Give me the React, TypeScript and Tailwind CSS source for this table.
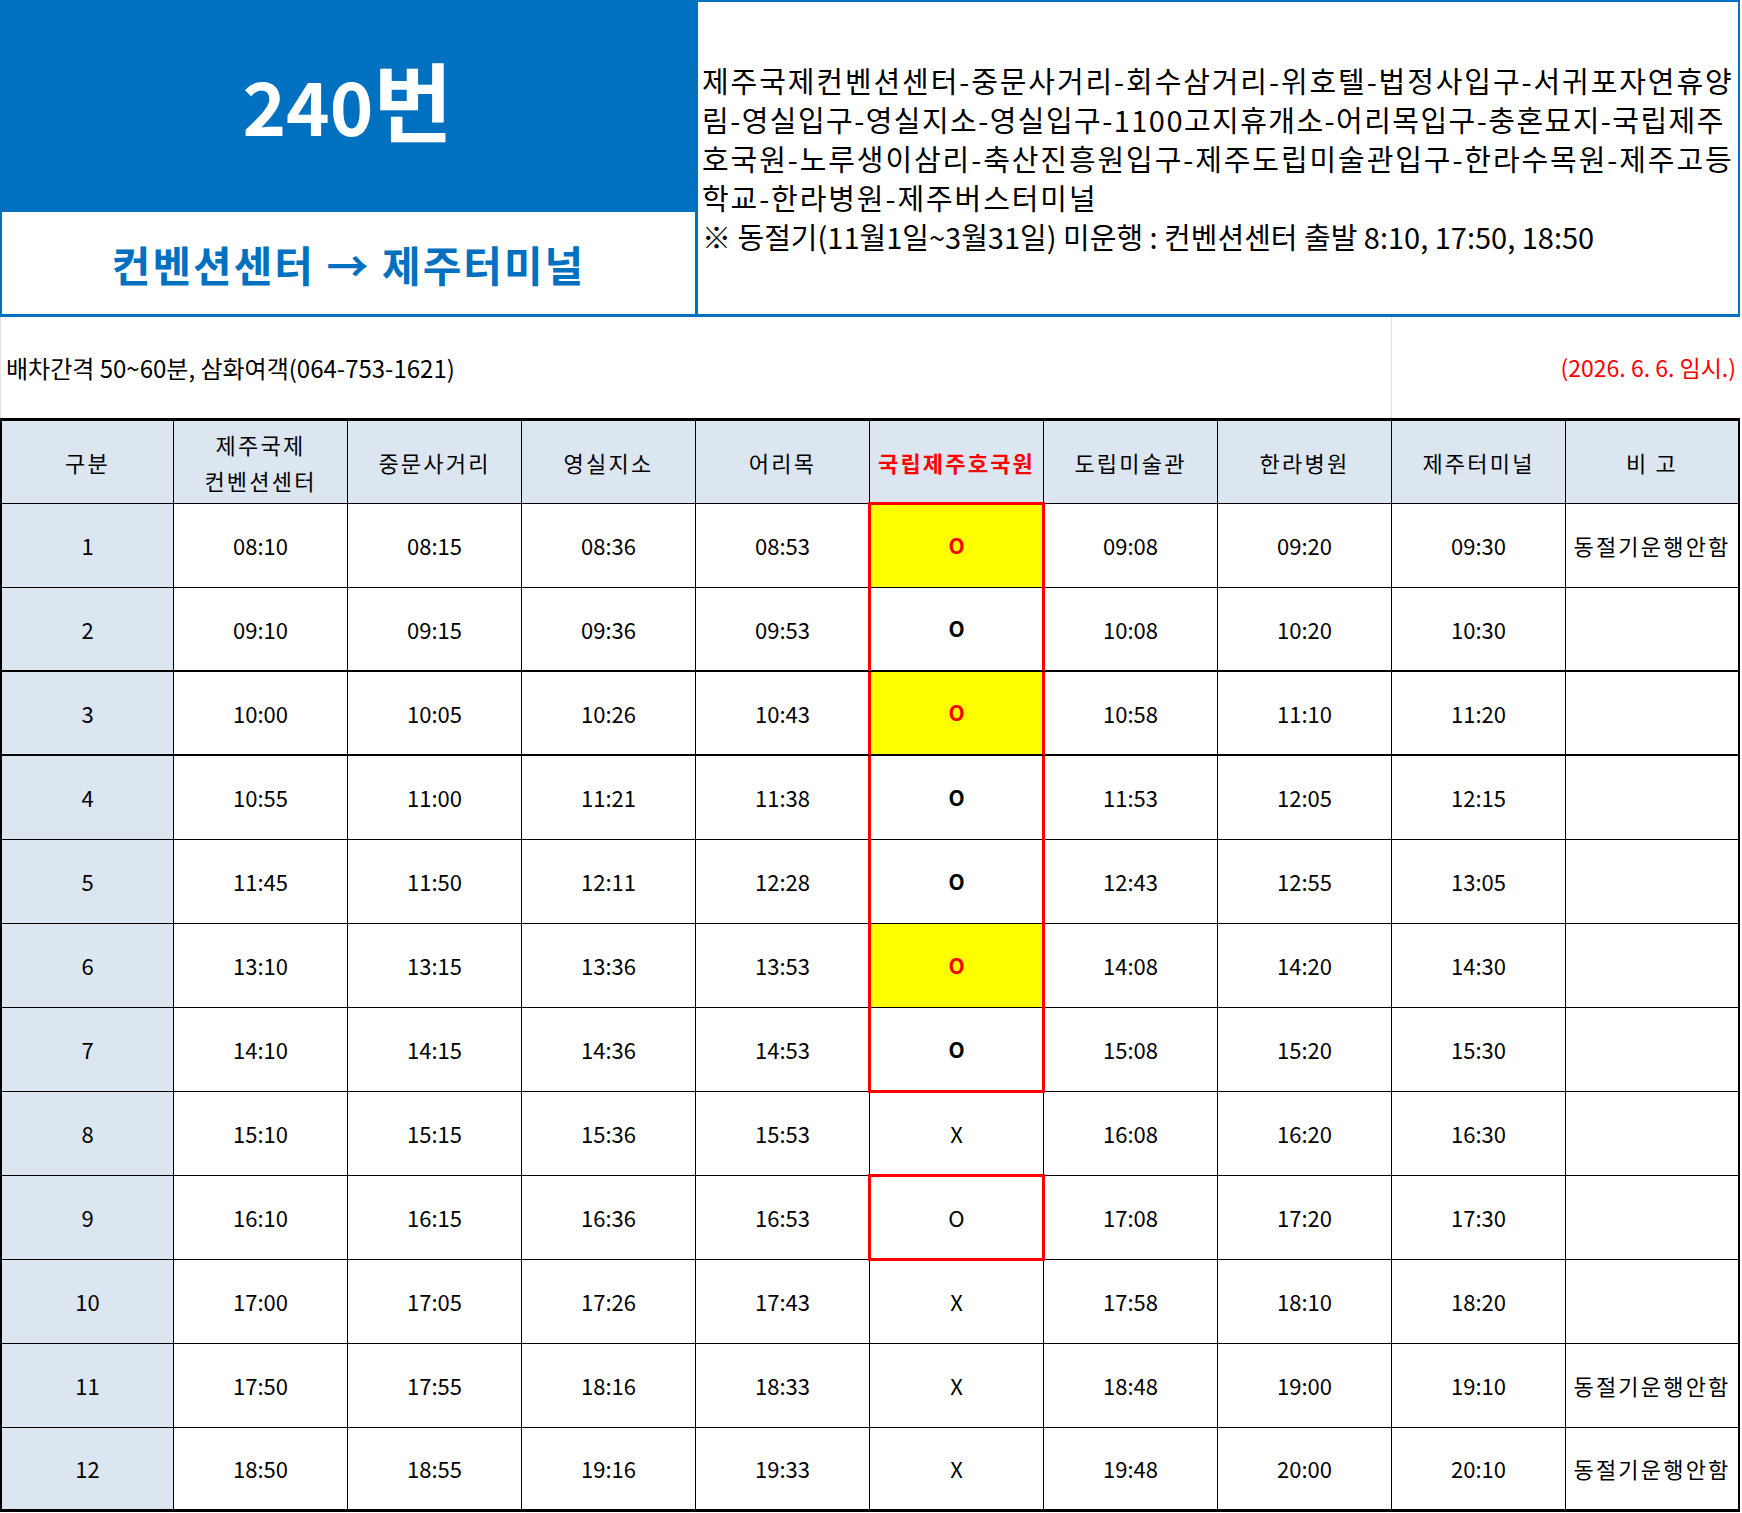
import React from 'react';

type Mark = 'hl' | 'bold' | 'plain' | 'x';

type Trip = {
  no: number;
  before: string[];
  mark: Mark;
  after: string[];
  note?: string;
};

const trips: Trip[] = [
  { no: 1, before: ['08:10', '08:15', '08:36', '08:53'], mark: 'hl', after: ['09:08', '09:20', '09:30'], note: '동절기운행안함' },
  { no: 2, before: ['09:10', '09:15', '09:36', '09:53'], mark: 'bold', after: ['10:08', '10:20', '10:30'] },
  { no: 3, before: ['10:00', '10:05', '10:26', '10:43'], mark: 'hl', after: ['10:58', '11:10', '11:20'] },
  { no: 4, before: ['10:55', '11:00', '11:21', '11:38'], mark: 'bold', after: ['11:53', '12:05', '12:15'] },
  { no: 5, before: ['11:45', '11:50', '12:11', '12:28'], mark: 'bold', after: ['12:43', '12:55', '13:05'] },
  { no: 6, before: ['13:10', '13:15', '13:36', '13:53'], mark: 'hl', after: ['14:08', '14:20', '14:30'] },
  { no: 7, before: ['14:10', '14:15', '14:36', '14:53'], mark: 'bold', after: ['15:08', '15:20', '15:30'] },
  { no: 8, before: ['15:10', '15:15', '15:36', '15:53'], mark: 'x', after: ['16:08', '16:20', '16:30'] },
  { no: 9, before: ['16:10', '16:15', '16:36', '16:53'], mark: 'plain', after: ['17:08', '17:20', '17:30'] },
  { no: 10, before: ['17:00', '17:05', '17:26', '17:43'], mark: 'x', after: ['17:58', '18:10', '18:20'] },
  { no: 11, before: ['17:50', '17:55', '18:16', '18:33'], mark: 'x', after: ['18:48', '19:00', '19:10'], note: '동절기운행안함' },
  { no: 12, before: ['18:50', '18:55', '19:16', '19:33'], mark: 'x', after: ['19:48', '20:00', '20:10'], note: '동절기운행안함' },
];

const cell = 'flex items-center justify-center border-r border-black';
const label = 'tracking-[2.2px]';

// red frame drawn over the 국립제주호국원 column
const frameFor = (no: number) => {
  if (no === 1) return 'absolute -left-[2px] -right-[2px] -top-[2px] -bottom-px border-x-[3px] border-t-[3px] border-[#ff0000]';
  if (no === 7) return 'absolute -left-[2px] -right-[2px] top-0 -bottom-[2px] border-x-[3px] border-b-[3px] border-[#ff0000]';
  if (no === 9) return 'absolute -left-[2px] -right-[2px] -top-[2px] -bottom-[2px] border-[3px] border-[#ff0000]';
  if (no < 7) return 'absolute -left-[2px] -right-[2px] top-0 -bottom-px border-x-[3px] border-[#ff0000]';
  return '';
};

const MarkCell = ({ trip }: { trip: Trip }) => {
  const frame = frameFor(trip.no);
  return (
    <div className={`${cell} relative ${trip.mark === 'hl' ? 'bg-[#ffff00]' : ''}`}>
      {trip.mark === 'hl' && <span className="text-[21px] font-bold text-[#ff0000]">O</span>}
      {trip.mark === 'bold' && <span className="text-[21px] font-bold">O</span>}
      {trip.mark === 'plain' && <span>O</span>}
      {trip.mark === 'x' && <span>X</span>}
      {frame && <div className={`${frame} pointer-events-none z-10`} />}
    </div>
  );
};

const App = () => {
  return (
    <div className="w-[1742px] bg-white font-['Noto_Sans_CJK_KR','Noto_Sans',sans-serif] text-black">
      {/* title block */}
      <div className="flex h-[317px] w-[1740px]">
        <div className="flex w-[695px] shrink-0 flex-col">
          <div className="flex h-[212px] items-center justify-center bg-[#0070C0] pb-[14px] font-bold text-white">
            <div className="flex items-baseline">
              <span className="text-[74px] leading-none">240</span>
              <span className="text-[86px] leading-none">번</span>
            </div>
          </div>
          <div className="flex flex-1 items-center justify-center border-b-[3px] border-l-2 border-[#0070C0] text-[42px] font-bold tracking-[2px] text-[#0070C0]">
            컨벤션센터 → 제주터미널
          </div>
        </div>
        <div className="flex min-w-0 flex-1 flex-col justify-center overflow-hidden border-t-2 border-r-2 border-b-[3px] border-l-[3px] border-[#0070C0] pl-[4px] text-[29px] leading-[39px]">
          <div className="whitespace-nowrap tracking-[1.9px]">제주국제컨벤션센터-중문사거리-회수삼거리-위호텔-법정사입구-서귀포자연휴양</div>
          <div className="whitespace-nowrap tracking-[1.45px]">림-영실입구-영실지소-영실입구-1100고지휴개소-어리목입구-충혼묘지-국립제주</div>
          <div className="whitespace-nowrap tracking-[1.9px]">호국원-노루생이삼리-축산진흥원입구-제주도립미술관입구-한라수목원-제주고등</div>
          <div className="whitespace-nowrap tracking-[1.9px]">학교-한라병원-제주버스터미널</div>
          <div className="whitespace-nowrap">※ 동절기(11월1일~3월31일) 미운행 : 컨벤션센터 출발 8:10, 17:50, 18:50</div>
        </div>
      </div>

      {/* info row */}
      <div className="grid h-[101px] w-[1740px] grid-cols-[1392px_1fr]">
        <div className="flex items-center border-x border-[#e0e0e0] pl-[5px] text-[24px]">배차간격 50~60분, 삼화여객(064-753-1621)</div>
        <div className="flex items-center justify-end pr-[4px] text-[23px] text-[#ff0000]">(2026. 6. 6. 임시.)</div>
      </div>

      {/* timetable */}
      <div className="w-[1740px] border-t-[3px] border-l-2 border-black text-[22px]">
        <div className="grid h-[83px] grid-cols-[172px_repeat(9,174px)] border-b border-black bg-[#DCE6F1]">
          <div className={`${cell} ${label}`}>구분</div>
          <div className={`${cell} ${label} flex-col leading-[36px]`}>
            <span>제주국제</span>
            <span>컨벤션센터</span>
          </div>
          <div className={`${cell} ${label}`}>중문사거리</div>
          <div className={`${cell} ${label}`}>영실지소</div>
          <div className={`${cell} ${label}`}>어리목</div>
          <div className={`${cell} ${label} font-bold text-[#ff0000]`}>국립제주호국원</div>
          <div className={`${cell} ${label}`}>도립미술관</div>
          <div className={`${cell} ${label}`}>한라병원</div>
          <div className={`${cell} ${label}`}>제주터미널</div>
          <div className={`${cell} ${label} border-r-2`}>비 고</div>
        </div>

        {trips.map((trip) => (
          <div
            key={trip.no}
            className={`grid h-[84px] grid-cols-[172px_repeat(9,174px)] border-black ${
              trip.no === 2 || trip.no === 3 ? 'border-b-2' : trip.no === 12 ? 'border-b-[3px]' : 'border-b'
            }`}
          >
            <div className={`${cell} bg-[#DCE6F1]`}>{trip.no}</div>
            {trip.before.map((t, i) => (
              <div key={i} className={cell}>{t}</div>
            ))}
            <MarkCell trip={trip} />
            {trip.after.map((t, i) => (
              <div key={i} className={cell}>{t}</div>
            ))}
            <div className={`${cell} ${label} border-r-2 whitespace-nowrap`}>{trip.note}</div>
          </div>
        ))}
      </div>
    </div>
  );
};

export default App;
